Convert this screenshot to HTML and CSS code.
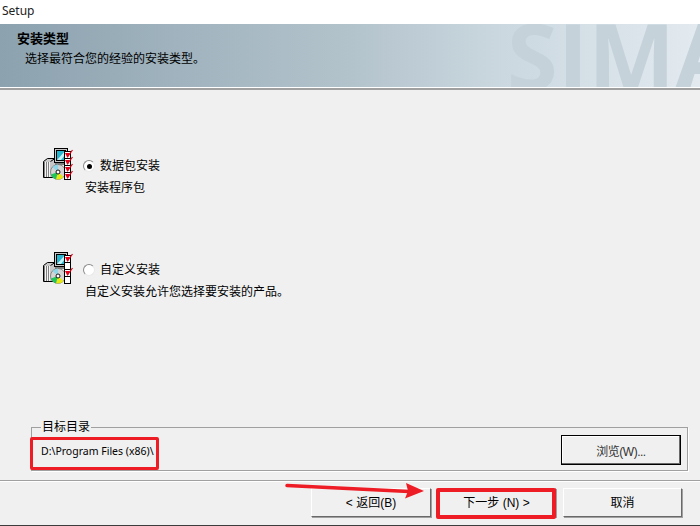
FILE: index.html
```html
<!DOCTYPE html>
<html lang="zh-CN">
<head>
<meta charset="UTF-8" />
<meta name="viewport" content="width=device-width, initial-scale=1" />
<title>Setup</title>
<link rel="stylesheet" href="styles.css">
</head>
<body>

<div class="window">
  <div class="titlebar">Setup</div>

  <div class="banner">
    <div class="watermark">SIMA</div>
    <h1>安装类型</h1>
    <p>选择最符合您的经验的安装类型。</p>
  </div>

  <div class="content">
    <div class="option option-first">
      <svg class="pkg-icon" viewBox="0 0 32 32" width="32" height="32">
        <use href="#pkg"></use>
        <use href="#tick" y="0"></use>
        <use href="#tick" y="7"></use>
        <use href="#tick" y="14"></use>
        <use href="#tick" y="21"></use>
      </svg>
      <div class="option-text">
        <div class="option-label"><span class="radio checked"></span>数据包安装</div>
        <div class="option-desc">安装程序包</div>
      </div>
    </div>

    <div class="option option-second">
      <svg class="pkg-icon" viewBox="0 0 32 32" width="32" height="32">
        <use href="#pkg"></use>
        <use href="#tick" y="0"></use>
        <use href="#tick" y="14"></use>
      </svg>
      <div class="option-text">
        <div class="option-label"><span class="radio"></span>自定义安装</div>
        <div class="option-desc">自定义安装允许您选择要安装的产品。</div>
      </div>
    </div>

    <fieldset class="target">
      <legend>目标目录</legend>
      <span class="path">D:\Program Files (x86)\</span>
      <button class="btn btn-browse">浏览(W)...</button>
    </fieldset>
  </div>

  <div class="footer">
    <button class="btn btn-back">&lt; 返回(B)</button>
    <button class="btn">下一步 (N) &gt;</button>
    <button class="btn btn-cancel">取消</button>
  </div>
</div>

<!-- marcas rojas encima de la captura -->
<div class="mark mark-path"></div>
<div class="mark mark-next"></div>
<svg class="arrow" viewBox="0 0 150 20" width="150" height="20">
  <path d="M2 4.5 L124 10.5" stroke="#ee1c25" stroke-width="3.5" stroke-linecap="round" fill="none"/>
  <path d="M139 10 L121 2 L123 10 L120 17.5 Z" fill="#ee1c25"/>
</svg>

<svg class="defs" width="0" height="0">
  <defs>
    <g id="pkg">
      <!-- torre -->
      <path d="M1.5 13.5 L5.5 10.5 L13.5 10.5 L13.5 29.5 L1.5 29.5 Z" fill="#c8c8c8" stroke="#000"/>
      <rect x="2" y="14" width="6" height="15" fill="#808080"/>
      <path d="M3.5 14 V29 M5.5 14 V29 M7.5 14 V29" stroke="#f4f4f4"/>
      <path d="M8.5 13.5 L13 10.5" stroke="#000"/>
      <!-- monitor -->
      <rect x="12.5" y="0.5" width="13" height="14" fill="#c8c8c8" stroke="#000"/>
      <rect x="14.5" y="2.5" width="9" height="10" fill="#27b5cf" stroke="#000"/>
      <path d="M15 12 L23 3 V7 L19 12 Z" fill="#c9f0f5"/>
      <rect x="13" y="15" width="9" height="2" fill="#808080"/>
      <!-- CD -->
      <circle cx="16" cy="24" r="7.5" fill="#d4d4d4" stroke="#666" stroke-width="0.7"/>
      <path d="M16 24 L21.5 29 A7.5 7.5 0 0 1 14 31.3 Z" fill="#e6e80f"/>
      <path d="M16 24 L14 31.3 A7.5 7.5 0 0 1 9 26.5 Z" fill="#21c45a"/>
      <path d="M16 24 L10.5 19 A7.5 7.5 0 0 1 16 16.5 Z" fill="#8fd6e8"/>
      <circle cx="16" cy="24" r="2" fill="#fff" stroke="#000" stroke-width="0.9"/>
      <!-- lista -->
      <rect x="22.5" y="3.5" width="6" height="7" fill="#fff" stroke="#000"/>
      <rect x="22.5" y="10.5" width="6" height="7" fill="#fff" stroke="#000"/>
      <rect x="22.5" y="17.5" width="6" height="7" fill="#fff" stroke="#000"/>
      <rect x="22.5" y="24.5" width="6" height="7" fill="#fff" stroke="#000"/>
    </g>
    <g id="tick">
      <path d="M23 5 H28 L25.5 10 Z" fill="#e2001a"/>
      <path d="M25.5 9 L30.5 2" stroke="#e2001a" stroke-width="1.2"/>
    </g>
  </defs>
</svg>

</body>
</html>
```

FILE: styles.css
```css
* {
  box-sizing: border-box;
}
html, body {
  margin: 0;
  padding: 0;
}
body {
  width: 700px;
  height: 526px;
  overflow: hidden;
  position: relative;
  background: #f0f0f0;
  color: #000;
  font-family: "Liberation Sans", "Noto Sans CJK SC", sans-serif;
  font-size: 12px;
}
.window {
  display: flex;
  flex-direction: column;
  height: 526px;
  border-bottom: 1px solid #3c3c3c;
}
.titlebar {
  height: 24px;
  background: #fff;
  padding: 3px 2px 0;
  font-family: "Noto Sans", sans-serif;
  font-size: 12px;
  line-height: 16px;
  color: #222;
}

.banner {
  position: relative;
  height: 63px;
  overflow: hidden;
  padding: 7px 0 0 17px;
  background: linear-gradient(90deg, #8ca2af 0%, #b3c3cc 50%, #cbd8e0 72%, #e3eaf0 100%);
}
.banner h1 {
  position: relative;
  margin: 0;
  font-size: 13px;
  font-weight: bold;
  line-height: 16px;
}
.banner p {
  position: relative;
  margin: 4px 0 0 8px;
  font-size: 12px;
  line-height: 16px;
}
.watermark {
  position: absolute;
  left: 507px;
  top: -15px;
  font-family: "Open Sans", sans-serif;
  font-size: 92px;
  font-weight: 700;
  line-height: 92px;
  color: #c5d2da;
  white-space: nowrap;
}

.content {
  flex: 1;
  display: flex;
  flex-direction: column;
  padding: 0 12px 10px 31px;
  border-top: 1px solid #fff;
  box-shadow: inset 0 2px 0 #a0a0a0, inset 0 3px 0 #f0f0f0;
  border-bottom: 1px solid #fff;
  position: relative;
}
.content::after {
  content: "";
  position: absolute;
  left: 0;
  right: 0;
  bottom: 0;
  height: 1px;
  background: #a0a0a0;
}
.option {
  display: flex;
  align-items: flex-start;
  margin-left: 11px;
}
.option-first {
  margin-top: 60px;
}
.option-second {
  margin-top: 55px;
}
.pkg-icon {
  flex: none;
  display: block;
}
.option-text {
  margin-left: 11px;
  padding-top: 9px;
}
.option-label {
  display: flex;
  align-items: center;
  height: 18px;
  line-height: 18px;
}
.option-desc {
  margin-top: 4px;
  line-height: 18px;
}
.radio {
  width: 12px;
  height: 12px;
  margin: 0 5px 0 -2px;
  border-radius: 50%;
  border: 1px solid #8a8a8a;
  border-right-color: #e8e8e8;
  border-bottom-color: #e8e8e8;
  background: #fff;
  display: flex;
  align-items: center;
  justify-content: center;
}
.radio.checked::before {
  content: "";
  width: 5px;
  height: 5px;
  border-radius: 50%;
  background: #000;
}

.target {
  margin: auto 0 0;
  padding: 3px 6px 0 9px;
  height: 51px;
  display: flex;
  align-items: center;
  justify-content: space-between;
  border: 1px solid #a0a0a0;
  box-shadow: 1px 1px 0 #fff;
}
.target legend {
  padding: 0 1px;
  line-height: 14px;
}
.path {
  font-family: "Noto Sans", sans-serif;
  font-size: 10.5px;
}

.btn {
  width: 119px;
  height: 29px;
  padding: 0 0 2px;
  background: #f0f0f0;
  color: #000;
  font-family: "Liberation Sans", "Noto Sans CJK SC", sans-serif;
  font-size: 12px;
  border: 1px solid;
  border-color: #fff #696969 #696969 #fff;
  box-shadow: 1px 1px 0 #a0a0a0;
}
.btn-browse {
  width: 120px;
  height: 30px;
  margin-top: -2px;
  padding: 0;
  border: 1px solid #000;
  box-shadow: inset -1px -1px 0 #696969, inset 1px 1px 0 #fff;
  color: #333;
  letter-spacing: -0.5px;
}
.footer {
  display: flex;
  justify-content: flex-end;
  gap: 6px;
  height: 43px;
  padding: 6px 18px 0 0;
}
.btn-back {
  width: 120px;
}
.btn-cancel {
  margin-left: 1px;
}

.mark {
  position: absolute;
  border: 3px solid #ee1c25;
  border-radius: 2px;
}
.mark-path {
  left: 30px;
  top: 437px;
  width: 129px;
  height: 33px;
}
.mark-next {
  left: 436px;
  top: 488px;
  width: 120px;
  height: 31px;
  border-width: 4px;
}
.arrow {
  position: absolute;
  left: 285px;
  top: 481px;
}
.defs {
  position: absolute;
}
```
